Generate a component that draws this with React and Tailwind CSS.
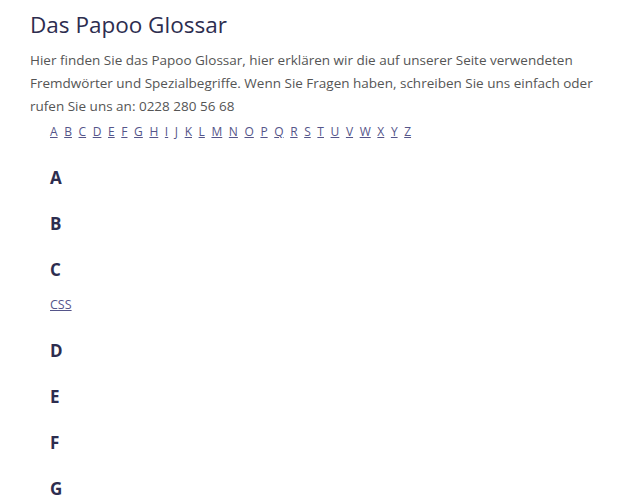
import React from "react";

const letters = "ABCDEFGHIJKLMNOPQRSTUVWXYZ".split("");

const entries = {
  C: ["CSS"],
};

export default function App() {
  return (
    <div className="min-h-screen bg-white pl-[30px] pr-[10px] pt-[10px] font-['Open_Sans',sans-serif]">
      <h1 className="text-[22.5px] leading-[30px] text-[#2d2d4f]">Das Papoo Glossar</h1>
      <p className="mt-[9px] text-[13.5px] leading-[23px] text-[#555]">
        Hier finden Sie das Papoo Glossar, hier erklären wir die auf unserer Seite verwendeten
        <br />
        Fremdwörter und Spezialbegriffe. Wenn Sie Fragen haben, schreiben Sie uns einfach oder
        <br />
        rufen Sie uns an: 0228 280 56 68
      </p>
      <div className="ml-[20px] mt-[4px] flex gap-[6.6px] text-[12px] leading-[20px] text-[#55558a]">
        {letters.map((l) => (
          <a key={l} href={"#" + l} className="underline">
            {l}
          </a>
        ))}
      </div>
      <div className="ml-[20px] mt-[21px]">
        {letters.slice(0, 8).map((l) => (
          <div key={l} className="mb-[16px]">
            <h2 className="text-[17px] font-bold leading-[30px] text-[#2d2d4f]">{l}</h2>
            {entries[l] && (
              <div className="mt-[10px] pb-[5px] text-[12.5px] leading-[20px] text-[#55558a]">
                {entries[l].map((e) => (
                  <a key={e} href="#" className="underline">
                    {e}
                  </a>
                ))}
              </div>
            )}
          </div>
        ))}
      </div>
    </div>
  );
}
